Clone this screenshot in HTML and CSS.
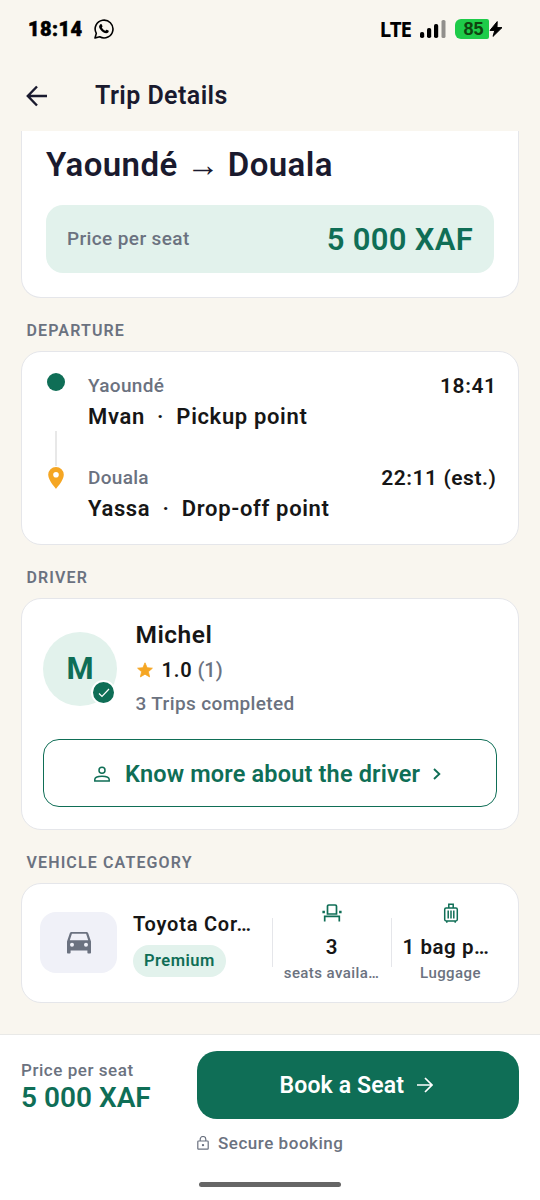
FILE: index.html
```html
<!DOCTYPE html>
<html lang="en">
<head>
<meta charset="utf-8">
<meta name="viewport" content="width=device-width, initial-scale=1">
<title>Trip Details</title>
<link rel="stylesheet" href="styles.css">
</head>
<body>
<div class="screen">
  <div class="status">
    <span class="clock">18:14</span>
    <svg class="wa" viewBox="0 0 20 20" width="20" height="20" fill="none" stroke="#000"><path d="M1 19l1.3-4.6A8.9 8.9 0 1 1 5.7 17.8Z" stroke-width="1.6" stroke-linejoin="round"/><path d="M6.4 5.3c.8-.5 1.2-.3 1.5.4l.6 1.5c.1.4-.5.9-.7 1.3.8 1.5 2 2.6 3.6 3.3.5-.3.9-1.2 1.4-1l1.6.8c.6.3.3 1.4-.2 1.9-1.400 1.200-3.300.600-5-.3-1.800-1.100-3.400-2.900-4-4.700-.300-1.200.200-2.500 1.200-3.200Z" fill="#000" stroke="none"/></svg>
    <span class="lte">LTE</span>
    <svg class="signal" viewBox="0 0 26 18" width="26" height="18"><g fill="#000"><rect x="0" y="12" width="4.200" height="6" rx="1.800"/><rect x="7" y="8" width="4.200" height="10" rx="1.800"/><rect x="14" y="4" width="4.200" height="14" rx="1.800"/></g><rect x="21.500" y="0" width="4" height="18" rx="1.600" fill="#918f8c"/></svg>
    <span class="battery">85</span>
    <svg class="bolt" viewBox="0 0 14 16" width="14" height="16"><path d="M8.200.6 1 9.400h4.800L4 15.400 13 6.600H8Z" fill="#000" stroke="#000" stroke-linejoin="round"/></svg>
  </div>
  <header class="header">
    <svg viewBox="0 0 22 22" width="22" height="22" fill="none" stroke="#1a1a2e" stroke-width="2.400"><path d="M21 11H2M11 1.500 1.800 11l9.200 9.500"/></svg>
    <h1 class="title">Trip Details</h1>
  </header>
  <main class="content">
    <section class="card route">
      <h2 class="cities">Yaoundé <span class="to">→</span> Douala</h2>
      <div class="price"><span class="price-label">Price per seat</span><span class="price-value">5 000 XAF</span></div>
    </section>

    <h3 class="label">DEPARTURE</h3>
    <section class="card departure">
      <div class="rail">
        <span class="dot"></span>
        <span class="line"></span>
        <svg viewBox="0 0 16 22" width="16" height="22"><path fill="#f5a623" fill-rule="evenodd" d="M8 0a7.800 7.800 0 0 0-7.800 7.800C.2 13.500 8 21.800 8 21.800s7.800-8.300 7.800-14A7.800 7.800 0 0 0 8 0Zm0 5a2.800 2.800 0 1 1 0 5.600A2.800 2.800 0 0 1 8 5Z"/></svg>
      </div>
      <div class="stops">
        <div class="stop"><div class="row"><span class="city">Yaoundé</span><span class="time">18:41</span></div><div class="place">Mvan&nbsp; ·&nbsp; Pickup point</div></div>
        <div class="stop"><div class="row"><span class="city">Douala</span><span class="time">22:11 (est.)</span></div><div class="place">Yassa&nbsp; ·&nbsp; Drop-off point</div></div>
      </div>
    </section>

    <h3 class="label">DRIVER</h3>
    <section class="card driver">
      <div class="profile">
        <div class="avatar">M<span class="verified"><svg viewBox="0 0 12 10" width="12" height="10" fill="none" stroke="#fff" stroke-width="1.200"><path d="m1 5.500 3 3L11 1"/></svg></span></div>
        <div class="about">
          <div class="name">Michel</div>
          <div class="rating"><svg viewBox="0 0 16 16" width="16" height="16"><path fill="#f5a623" stroke="#f5a623" stroke-width=".8" stroke-linejoin="round" d="m8 .8 2.100 4.900 5.300.500-4 3.500 1.200 5.200L8 12.200l-4.600 2.700 1.200-5.200-4-3.500 5.300-.5Z"/></svg><span class="score">1.0</span><span class="count">(1)</span></div>
          <div class="trips">3 Trips completed</div>
        </div>
      </div>
      <div class="more">
        <svg class="person" viewBox="0 0 16 16" width="16" height="16" fill="none" stroke="#0f6e56" stroke-width="1.500"><circle cx="8" cy="4.200" r="3"/><path d="M.8 15v-1.400C.8 11.200 4.500 10.300 8 10.300s7.200.9 7.200 3.300V15Z"/></svg>
        <span class="more-text">Know more about the driver</span>
        <svg class="chev" viewBox="0 0 8 12" width="8" height="12" fill="none" stroke="#0f6e56" stroke-width="1.900"><path d="m1 1 5.300 5L1 11"/></svg>
      </div>
    </section>

    <h3 class="label">VEHICLE CATEGORY</h3>
    <section class="card vehicle">
      <div class="thumb"><svg viewBox="0 0 24 22" width="24" height="22"><path fill="#6b7280" fill-rule="evenodd" d="M21.300 1.400C21 .6 20.300 0 19.400 0H4.600C3.700 0 3 .6 2.700 1.400L0 9.500V20.500c0 .6.500 1 1 1h1.600c.6 0 1-.4 1-1V18.500h16.800v2c0 .6.400 1 1 1H23c.5 0 1-.4 1-1V9.500ZM4.900 1.800h14.200l2.100 6.400H2.800ZM5 10.700a2 2 0 1 1 0 4 2 2 0 0 1 0-4Zm14 0a2 2 0 1 1 0 4 2 2 0 0 1 0-4Z"/></svg></div>
      <div class="model"><div class="model-name">Toyota Cor…</div><span class="tag">Premium</span></div>
      <div class="stat">
        <svg viewBox="0 0 20 20" width="20" height="20" fill="none" stroke="#0f6e56" stroke-width="1.700"><path d="M5.500 11V3.300Q5.500 2 6.800 2h6.400Q14.500 2 14.500 3.300V11ZM2.700 18.500v-5.200h14.600v5.200"/><path d="M.4 9h2.500M17.100 9h2.500" stroke-width="2.300"/></svg>
        <div class="stat-value">3</div><div class="stat-label">seats availa…</div>
      </div>
      <div class="stat">
        <svg viewBox="0 0 20 20" width="20" height="20" fill="none" stroke="#0f6e56" stroke-width="1.500"><rect x="3.700" y="5" width="12.600" height="13" rx="1.400"/><path d="M7.800 5V1.200h4.400V5M7.200 7.500v8M10 7.500v8M12.800 7.500v8M5.800 18v1.700M14.200 18v1.700"/></svg>
        <div class="stat-value bag">1 bag p…</div><div class="stat-label">Luggage</div>
      </div>
    </section>
  </main>
  <footer class="footer">
    <div class="total"><div class="total-label">Price per seat</div><div class="total-value">5 000 XAF</div></div>
    <div class="action">
      <div class="book"><span class="book-text">Book a Seat</span><svg viewBox="0 0 16 16" width="16" height="16" fill="none" stroke="#fff" stroke-width="1.700"><path d="M0 8h14.500M8 1l7 7-7 7"/></svg></div>
      <div class="secure"><svg viewBox="0 0 12 14" width="12" height="14" fill="none" stroke="#6b7280" stroke-width="1.200"><rect x=".8" y="5" width="10.400" height="8.200" rx=".8"/><path d="M3.200 5V3.300a2.800 2.800 0 0 1 5.600 0V5"/><circle cx="6" cy="9.100" r=".6" fill="#6b7280"/></svg><span>Secure booking</span></div>
    </div>
    <div class="home"></div>
  </footer>
</div>
</body>
</html>
```
FILE: styles.css
```css
* { box-sizing: border-box; }
body { margin: 0; font-family: Roboto, "Noto Sans", sans-serif; font-weight: 500; color: #161616; background: #f9f6ef; }
h1, h2, h3 { margin: 0; }
svg { display: block; flex: none; }
.screen { width: 540px; height: 1200px; overflow: hidden; display: flex; flex-direction: column; white-space: nowrap; }

.status { height: 60px; display: flex; align-items: center; padding: 0 37px 2px 28px; color: #000; }
.clock { font-weight: 900; font-size: 20px; width: 56px; letter-spacing: .4px; -webkit-text-stroke: .5px #000; }
.wa { margin-left: 10px; }
.lte { margin-left: auto; font: 700 20.500px "Noto Sans", sans-serif; letter-spacing: -1px; }
.signal { margin: 0 9px 0 9px; }
.battery { width: 34px; height: 20px; border-radius: 6px 2px 2px 6px; background: #1ecb49; color: #10430f; font: 700 18px/20px "Liberation Sans", sans-serif; text-align: center; padding-left: 3px; }

.header { height: 71px; display: flex; align-items: center; gap: 47px; padding-left: 26px; }
.title { font-size: 25px; font-weight: 600; line-height: 30px; letter-spacing: .42px; color: #1a1a2e; }

.content { height: 903px; padding: 0 21px; }
.card { background: #fff; border: 1px solid #e5e6ea; border-radius: 20px; }
.label { margin: 23px 0 10px; font-size: 16px; line-height: 20px; font-weight: 600; letter-spacing: 1.130px; color: #6b7280; padding-left: 5.500px; }

.route { height: 167px; border-top: 0; border-radius: 0 0 20px 20px; padding: 14px 24px 0; }
.cities { height: 40px; font-size: 33px; line-height: 40px; font-weight: 600; letter-spacing: .4px; color: #1a1a2e; }
.to { display: inline-block; width: 33px; line-height: 30px; font-family: "Liberation Sans", sans-serif; font-size: 33px; font-weight: 700; }
.price { margin-top: 20px; height: 68px; border-radius: 17px; background: #e2f2ec; display: flex; align-items: center; justify-content: space-between; padding: 0 21px; }
.price-label { font-size: 19px; letter-spacing: .38px; color: #6b7280; padding-bottom: 2px; }
.price-value { font-size: 31px; font-weight: 600; letter-spacing: .3px; color: #0f6e56; }

.departure { height: 194px; display: flex; padding: 21px 22px 0 25px; gap: 23px; }
.rail { width: 18px; display: flex; flex-direction: column; align-items: center; }
.dot { width: 18px; height: 18px; border-radius: 50%; background: #0f6e56; }
.line { width: 2px; height: 35px; margin: 40px 0 1px; background: #e8e8e8; }
.stops { flex: 1; margin-top: -1px; }
.stop { height: 92px; }
.row { display: flex; justify-content: space-between; line-height: 28px; }
.city { font-size: 19px; letter-spacing: .3px; color: #6b7280; }
.time { font-size: 21px; font-weight: 600; letter-spacing: .55px; margin-right: -.5px; }
.place { font-size: 22px; line-height: 34px; font-weight: 600; letter-spacing: .65px; }

.driver { height: 232px; padding: 21px 21px 0; }
.profile { display: flex; height: 119px; gap: 18.500px; }
.avatar { position: relative; width: 74px; height: 74px; margin-top: 12px; border-radius: 50%; background: #e2f2ec; color: #0f6e56; font-size: 31px; line-height: 73px; font-weight: 700; text-align: center; }
.verified { position: absolute; left: 48px; top: 48px; width: 25px; height: 25px; border: 2px solid #fff; border-radius: 50%; background: #0f6e56; display: flex; align-items: center; justify-content: center; }
.name { font-size: 24.500px; line-height: 30px; font-weight: 600; letter-spacing: .5px; }
.rating { display: flex; align-items: center; height: 40px; font-size: 20px; padding-left: 1px; margin-bottom: 1px; }
.score { margin-left: 9px; font-weight: 600; letter-spacing: .8px; }
.count { margin-left: 5px; color: #6b7280; }
.trips { font-size: 19px; line-height: 26px; letter-spacing: .37px; color: #6b7280; }
.more { height: 68px; border: 1.500px solid #0f6e56; border-radius: 16px; display: flex; align-items: center; padding: 1px 0 0 50px; color: #0f6e56; }
.more-text { margin-left: 15px; font-size: 23.500px; font-weight: 600; letter-spacing: .17px; }
.chev { margin-left: 13px; }

.vehicle { height: 120px; display: flex; align-items: center; padding-left: 18px; }
.thumb { width: 77px; height: 61px; margin-bottom: 1px; border-radius: 16px; background: #f0f1f8; display: flex; align-items: center; justify-content: center; }
.model { width: 139px; margin-left: 16px; height: 70px; }
.model-name { font-size: 20px; font-weight: 600; line-height: 32px; height: 37px; letter-spacing: .78px; }
.tag { display: inline-block; height: 32px; line-height: 31px; border-radius: 16px; background: #e2f2ec; color: #0f6e56; font-size: 16.500px; font-weight: 600; letter-spacing: .5px; padding: 0 11px; }
.stat { width: 119px; height: 90px; display: flex; flex-direction: column; align-items: center; position: relative; padding-top: 5px; }
.stat::before { content: ""; position: absolute; left: 0; top: 20px; height: 49px; width: 1px; background: #e5e6ea; }
.stat-value { font-size: 20.500px; line-height: 26px; margin-top: 11px; font-weight: 600; }
.bag { letter-spacing: .550px; margin-right: 9px; }
.stat-label { font-size: 15px; line-height: 20px; margin-top: 3px; letter-spacing: .42px; color: #6b7280; }

.footer { height: 166px; background: #fff; border-top: 1px solid #e9e9e7; display: grid; grid-template-columns: 176px 322px; grid-template-rows: 147px 5px; padding-left: 21px; }
.total { padding-top: 24px; }
.total-label { font-size: 17px; line-height: 22px; letter-spacing: .55px; color: #6b7280; }
.total-value { font-size: 28px; line-height: 33px; font-weight: 600; color: #0f6e56; }
.action { padding-top: 16px; }
.book { height: 68px; border-radius: 20px; background: #0f6e56; color: #fff; display: flex; align-items: center; padding-left: 82.500px; gap: 13px; }
.book-text { font-size: 23px; font-weight: 600; letter-spacing: .15px; }
.secure { margin-top: 13px; display: flex; align-items: center; gap: 9px; font-size: 17px; line-height: 22px; letter-spacing: .53px; color: #6b7280; }
.home { grid-column: 1 / 3; width: 142px; height: 5px; margin-left: 178px; border-radius: 3px; background: #666; }
```
